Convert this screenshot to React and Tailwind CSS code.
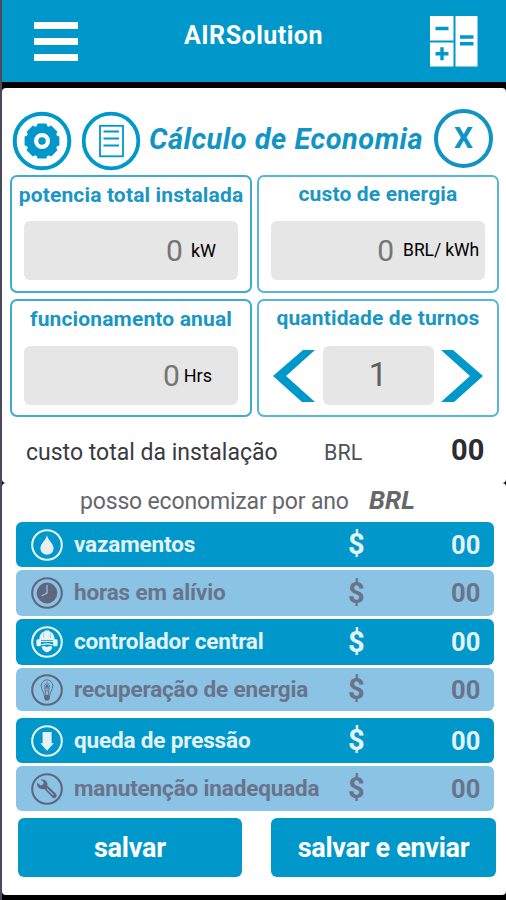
const BLUE = "#0098cb";

function Gear() {
  const teeth = [0, 45, 90, 135, 180, 225, 270, 315];
  return (
    <svg viewBox="0 0 60 60" className="h-[60px] w-[60px] shrink-0">
      <circle cx="30" cy="30" r="27.3" fill="none" stroke={BLUE} strokeWidth="4" />
      {teeth.map((a) => (
        <path key={a} d="M24.5 16 L25.6 12.6 H34.4 L35.5 16 Z" fill={BLUE} transform={`rotate(${a} 30 30)`} />
      ))}
      <circle cx="30" cy="30" r="11.9" fill="none" stroke={BLUE} strokeWidth="7.8" />
      <circle cx="30" cy="30" r="3.8" fill={BLUE} />
    </svg>
  );
}

function Sheet() {
  return (
    <svg viewBox="0 0 60 60" className="h-[60px] w-[60px] shrink-0" fill="none" stroke={BLUE}>
      <circle cx="30" cy="30" r="27.3" strokeWidth="3.8" />
      <rect x="19" y="14.8" width="23" height="30.5" strokeWidth="1.8" />
      <path d="M22.5 20.5H38M22.5 27.5H38M22.5 34.5H38" strokeWidth="1.8" />
    </svg>
  );
}

function Calculator() {
  return (
    <svg viewBox="0 0 48 51" className="h-[51px] w-[48px]">
      <path d="M0 0H23.5V24.5H0ZM0 26.5H23.5V50.5H0ZM25.5 0H47.5V50.5H25.5Z" fill="#fff" />
      <path d="M5.5 12.5H18.5M5.5 37.8H18.5M12 31.3V44.3M30 21H43.5M30 27.7H43.5" stroke={BLUE} strokeWidth="3.4" />
    </svg>
  );
}

function RowIcon({ kind, color, bg }) {
  return (
    <svg viewBox="0 0 32 32" className="h-8 w-8 shrink-0">
      <circle cx="16" cy="16" r="14.8" fill="none" stroke={color} strokeWidth="2.1" />
      {kind === "drop" && <path d="M16 6.3C17 11 22.6 14.8 22.6 19.6A6.6 6.1 0 0 1 9.4 19.6C9.4 14.8 15 11 16 6.3Z" fill="#e6eef2" />}
      {kind === "clock" && (
        <>
          <circle cx="16" cy="16" r="10.4" fill={color} />
          <path d="M16 8V16L10.5 19" fill="none" stroke={bg} strokeWidth="1.3" />
        </>
      )}
      {kind === "helmet" && (
        <>
          <path d="M8.2 14.2C8.2 9 11 5.8 13.4 5.4L14 4.4H18L18.6 5.4C21 5.8 23.8 9 23.8 14.2Z" fill="#e6f1f5" />
          <path d="M12.6 6.5V12M19.4 6.5V12" stroke={bg} strokeWidth=".3" />
          <rect x="5.4" y="13.2" width="4.6" height="7" rx="1.5" fill={color} />
          <rect x="22" y="13.2" width="4.6" height="7" rx="1.5" fill={color} />
          <path d="M9 15.5H23M10.5 18.8Q16 16.8 21.5 18.8" fill="none" stroke={color} strokeWidth="1.2" />
          <path d="M10.5 20.5L13.5 20L16 21L18.5 20L21.5 20.5Q20.5 25 16 26.6Q11.5 25 10.5 20.5Z" fill={color} />
        </>
      )}
      {kind === "bulb" && (
        <g fill="none" stroke={color} strokeWidth=".9">
          <path d="M13.3 21.5C13.3 18 10.2 16.2 10.2 11.8A5.8 6 0 0 1 21.8 11.8C21.8 16.2 18.7 18 18.7 21.5Z" />
          <path d="M14.8 21L13.6 11.5L16 13.2L18.4 11.5L17.2 21M16 7.5V18M13.8 9.5L18.2 14.8M18.2 9.5L13.8 14.8" strokeWidth=".8" />
          <path d="M13.5 22.2H18.5L17.8 26H14.2Z" fill={color} />
        </g>
      )}
      {kind === "arrow" && <path d="M11.6 7H20.6V18.3H22.8L16 25.8L9.4 18.3H11.6Z" fill="#e6f1f5" />}
      {kind === "wrench" && (
        <>
          <path d="M9.8 6.8C12.6 5.8 16 7.4 16.4 10.8L16.2 12.6L25 20.8C26 22.2 25.8 23.6 24.8 24.6C23.8 25.4 22.4 25.4 21.4 24.4L13.4 15.9C10 16.9 6.2 14.8 6 11C6 10.4 6 9.8 6.3 9.4L9.6 12.4L12.2 11.6L12.8 9.2Z" fill={color} />
          <path d="M15.8 15.6L22.5 22.2" stroke={bg} strokeWidth="1.1" />
        </>
      )}
    </svg>
  );
}

const card = "flex flex-col rounded-[7px] border-2";
const label = "text-center text-[21px] font-bold leading-[24px] tracking-[0.15px] text-[#1996c3] whitespace-nowrap";
const box = "flex items-center justify-end rounded-md bg-[#e6e6e6]";

function Field({ title, unit, borderClass, boxClass, labelClass, unitClass }) {
  return (
    <div className={`${card} ${borderClass}`}>
      <div className={`${label} ${labelClass}`}>{title}</div>
      <div className={`${box} mx-3 h-[59px] ${boxClass}`}>
        <span className="text-[30px] text-[#757575]">0</span>
        <span className={`whitespace-nowrap text-black ${unitClass}`}>{unit}</span>
      </div>
    </div>
  );
}

const rows = [
  { kind: "drop", name: "vazamentos", cls: "h-[45px] mb-[3px]" },
  { kind: "clock", name: "horas em alívio", cls: "h-[46px] mb-[3px]" },
  { kind: "helmet", name: "controlador central", cls: "h-[46px] mb-[3px]" },
  { kind: "bulb", name: "recuperação de energia", cls: "h-[43px] mb-[7px]" },
  { kind: "arrow", name: "queda de pressão", cls: "h-[45px] mb-[3px]" },
  { kind: "wrench", name: "manutenção inadequada", cls: "h-[45px]" },
];

export default function App() {
  return (
    <div className="h-[900px] w-[506px] overflow-hidden bg-black font-[Roboto,sans-serif]">
      <div className="flex h-full flex-col border-l-2 border-[#4b495b]">
        <header className="flex h-[82px] shrink-0 justify-between bg-[#0098cb] pl-8 pr-7">
          <div className="mt-[22px] flex w-11 flex-col gap-[9px]">
            <i className="h-[7px] bg-white" />
            <i className="h-[7px] bg-white" />
            <i className="h-[7px] bg-white" />
          </div>
          <h1 className="mt-[21px] pr-px text-[25px] font-bold leading-[30px] tracking-[0.5px] text-white">AIRSolution</h1>
          <div className="mt-4"><Calculator /></div>
        </header>

        <section className="mt-[6px] h-[395px] shrink-0 rounded-[4px] bg-white">
          <div className="flex h-[87px] pl-[10px] pt-[23px]">
            <Gear />
            <div className="ml-[9px]"><Sheet /></div>
            <h2 className="ml-[8px] mt-[11px] w-[280px] whitespace-nowrap text-[29px] font-bold italic leading-[34px] tracking-[0.5px] text-[#1094c4]">Cálculo de Economia</h2>
            <div className="-mt-[2px] ml-[5px] flex h-[59px] w-[59px] shrink-0 items-center justify-center rounded-full border-4 border-[#1094c4] pb-[2px] text-[30px] font-bold leading-none text-[#1094c4]">X</div>
          </div>
          <div className="grid grid-cols-[242px_242px] grid-rows-[118px_118px] gap-x-[5px] gap-y-[6px] pl-2">
            <Field title="potencia total instalada" unit="kW" borderClass="border-[#3fabd0]" labelClass="mt-[6px]" boxClass="mt-[14px] pr-[22px]" unitClass="ml-2 text-[18px]" />
            <Field title="custo de energia" unit="BRL/ kWh" borderClass="border-[#5ab6d6]" labelClass="mt-[5px]" boxClass="mt-[15px] pr-[6px]" unitClass="ml-[9px] text-[17.5px] tracking-[-0.1px]" />
            <Field title="funcionamento anual" unit="Hrs" borderClass="border-[#3fabd0]" labelClass="mt-[6px]" boxClass="mt-[15px] pr-[26px]" unitClass="ml-1 text-[18px]" />
            <div className={`${card} border-[#5ab6d6]`}>
              <div className={`${label} mt-[5px]`}>quantidade de turnos</div>
              <div className="mt-[16px] flex h-[59px] items-center justify-between px-[14px]">
                <svg viewBox="0 0 42 52" className="h-[52px] w-[42px]"><path d="M30 0H42L13 26L42 52H29L0 26Z" fill={BLUE} /></svg>
                <div className="flex h-[59px] w-[111px] items-center justify-center rounded-md bg-[#e6e6e6] pb-0.5 text-[33px] text-[#606060]">1</div>
                <svg viewBox="0 0 42 52" className="h-[52px] w-[42px]"><path d="M12 0H0L29 26L0 52H13L42 26Z" fill={BLUE} /></svg>
              </div>
            </div>
          </div>
          <div className="flex items-baseline whitespace-nowrap pl-6 pt-[16px] text-[#3a3a40]">
            <span className="w-[298px] text-[23px] leading-[34px]">custo total da instalação</span>
            <span className="w-[127px] text-[21.5px] text-[#505056]">BRL</span>
            <span className="text-[29px] font-bold leading-[34px] text-[#2c2c34]">00</span>
          </div>
        </section>

        <section className="flex h-[412px] shrink-0 flex-col rounded-[4px] bg-white">
          <div className="flex h-[39px] shrink-0 items-baseline whitespace-nowrap pl-[78px] pt-[2px] text-[#66666b]">
            <span className="w-[289px] text-[23px] leading-[30px] tracking-[-0.17px]">posso economizar por ano</span>
            <span className="text-[26px] font-bold italic leading-[30px]">BRL</span>
          </div>
          <div className="flex flex-col pl-[14px] pr-[12px]">
            {rows.map((r, i) => {
              const on = i % 2 === 0;
              return (
                <div key={r.kind} className={`flex items-center rounded-[6px] pl-[15px] font-bold ${r.cls} ${on ? "bg-[#0098cb] text-[#e3f3fa]" : "bg-[#8bc3e4] text-[#69738a]"}`}>
                  <RowIcon kind={r.kind} color={on ? "#e6f5fb" : "#5f667d"} bg={on ? BLUE : "#8bc3e4"} />
                  <span className="ml-[11px] w-[274px] whitespace-nowrap text-[22.5px] tracking-[-0.15px]">{r.name}</span>
                  <span className="w-[103px] pt-px text-[29px]">$</span>
                  <span className="pt-px text-[25.5px]">00</span>
                </div>
              );
            })}
          </div>
          <div className="mt-[7px] flex gap-[29px] pl-4 text-[27px] font-bold text-white">
            <button className="h-[59px] w-[224px] rounded-md bg-[#0098cb] pt-[2px] tracking-[-0.2px]">salvar</button>
            <button className="h-[59px] w-[225px] rounded-md bg-[#0098cb] pt-[2px] tracking-[-0.3px]">salvar e enviar</button>
          </div>
        </section>
      </div>
    </div>
  );
}
